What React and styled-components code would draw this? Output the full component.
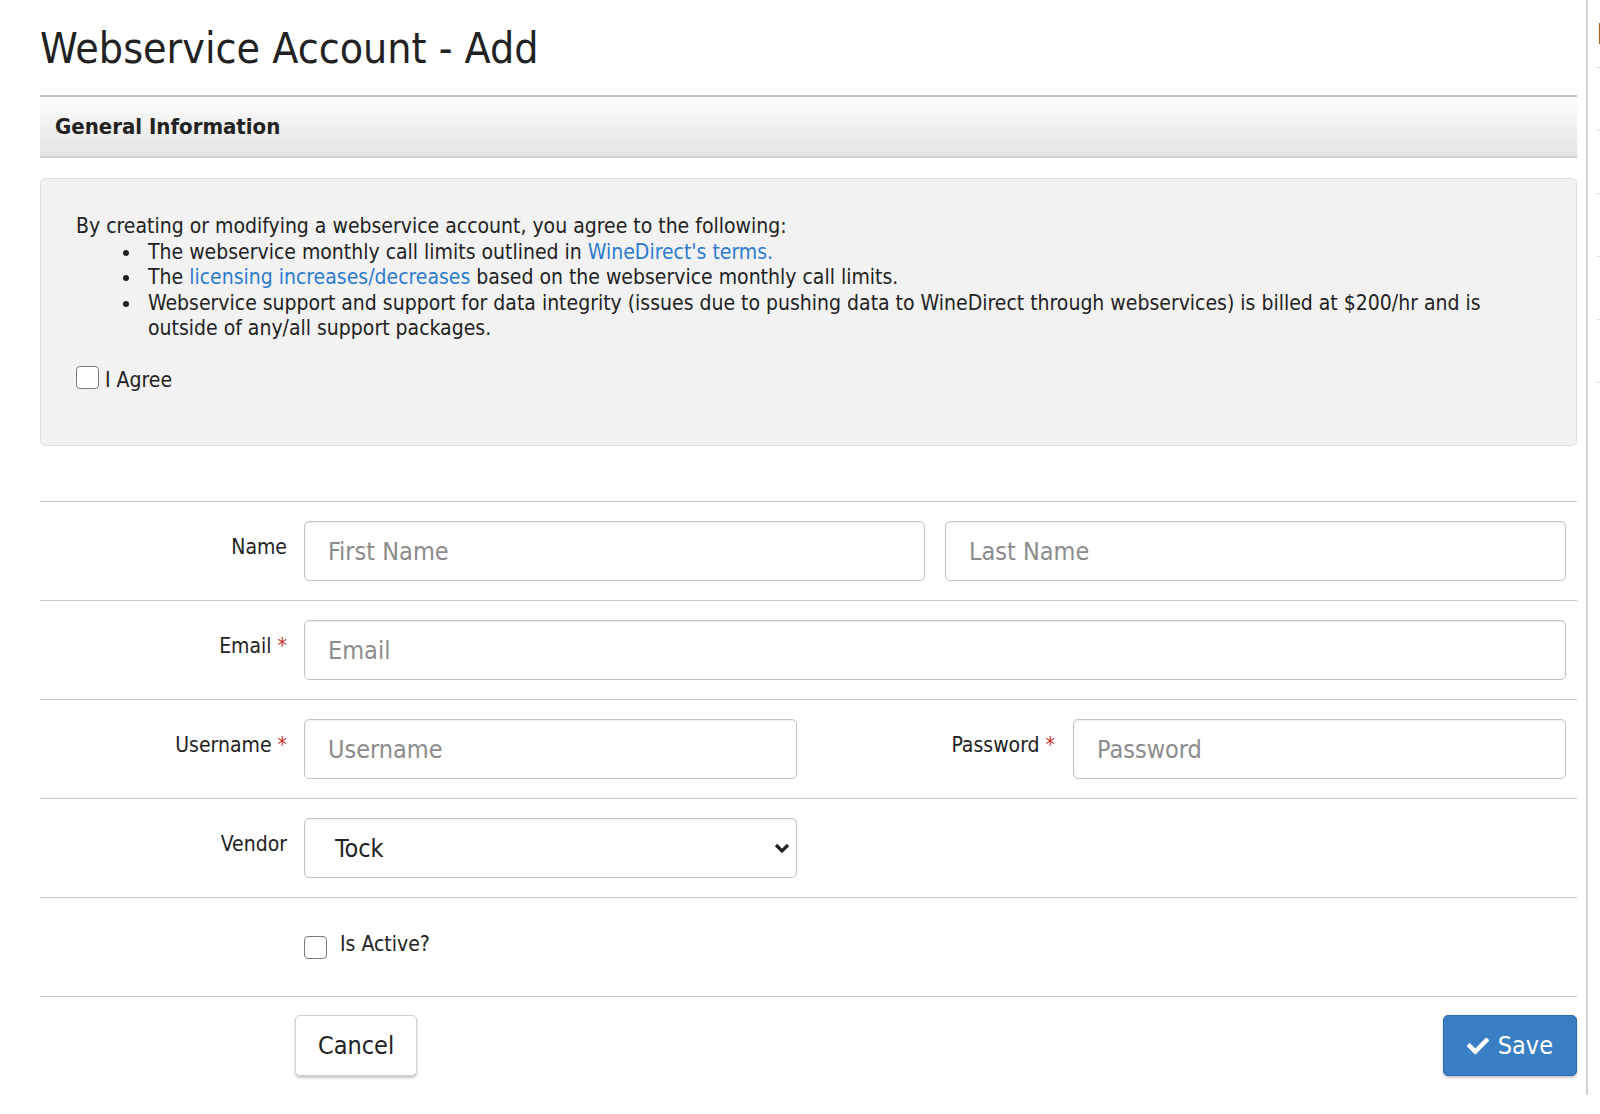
import React from 'react';
import styled, {createGlobalStyle} from 'styled-components';
import {FaCheck} from 'react-icons/fa';

const GlobalStyle = createGlobalStyle`
  body {
    margin: 0;
    background: #fff;
    color: #222;
    font-family: "DejaVu Sans Condensed", "DejaVu Sans", sans-serif;
  }
  * {
    box-sizing: border-box;
  }
`;

const Page = styled.div`
  display: flex;
  align-items: flex-start;
  width: 1600px;
`;

const Main = styled.main`
  flex: 1;
  padding: 0 9px 19px 40px;
  border-right: 2px solid #d2d2d2;
`;

const Sidebar = styled.aside`
  width: 12px;
  overflow: hidden;
  padding-left: 9px;
  white-space: nowrap;
`;

const SideTitle = styled.div`
  height: 67px;
  padding-top: 18px;
  font-size: 28px;
  font-weight: bold;
  color: #222;
`;

const SideItem = styled.div`
  height: 63px;
  border-top: 1px solid #dcdcdc;
`;

const Title = styled.h1`
  margin: 0 0 21px;
  padding-top: 24px;
  font-size: 42.5px;
  font-weight: normal;
  line-height: 50px;
  color: #222;
`;

const SectionHeader = styled.div`
  display: flex;
  align-items: center;
  height: 63px;
  padding-left: 15px;
  border-top: 2px solid #c4c4c4;
  border-bottom: 2px solid #d2d2d2;
  background: linear-gradient(#fdfdfd, #e4e4e4);
  font-size: 22px;
  font-weight: bold;
  color: #222;
`;

const InfoBox = styled.div`
  height: 268px;
  margin-top: 20px;
  padding: 35px 35px 0 35px;
  border: 1px solid #dedede;
  border-radius: 5px;
  background: #f2f2f2;
  font-size: 21px;
  line-height: 25.5px;
`;

const Terms = styled.ul`
  margin: 0;
  padding-left: 72px;
  list-style: none;
`;

const Term = styled.li`
  position: relative;
  &::before {
    content: "";
    position: absolute;
    left: -25px;
    top: 10px;
    width: 6px;
    height: 6px;
    border-radius: 50%;
    background: #222;
  }
`;

const Link = styled.a`
  color: #2b7bcf;
  text-decoration: none;
`;

const AgreeRow = styled.label`
  display: flex;
  align-items: flex-start;
  gap: 6px;
  margin-top: 24px;
  font-size: 21px;
  line-height: 25px;
  & > span {
    padding-top: 2px;
  }
`;

const Checkbox = styled.input.attrs({type: 'checkbox'})`
  appearance: none;
  width: 23px;
  height: 23px;
  margin: 0;
  flex: none;
  border: 1.5px solid #7a7a7a;
  border-radius: 4px;
  background: #fff;
`;

const Form = styled.form`
  margin-top: 55px;
`;

const FormRow = styled.div`
  display: grid;
  grid-template-columns: 247px 1fr;
  column-gap: 17px;
  padding: 19px 11px 19px 0;
  border-top: 1px solid #c8c8c8;
`;

const Label = styled.label`
  padding-top: 14px;
  text-align: right;
  font-size: 21px;
  line-height: 25px;
  color: #222;
`;

const Required = styled.span`
  margin-left: 6px;
  color: #c9302c;
`;

const Fields = styled.div`
  display: grid;
  grid-template-columns: ${({$cols}) => $cols || '1fr'};
  column-gap: ${({$gap}) => $gap || 0}px;
  align-items: start;
`;

const InlineLabel = styled(Label)`
  padding-right: 18px;
`;

const TextInput = styled.input`
  width: 100%;
  height: 60px;
  padding: 0 23px;
  border: 1px solid #c4c4c4;
  border-radius: 5px;
  box-shadow: inset 0 1px 2px rgba(0, 0, 0, 0.08);
  font-family: inherit;
  font-size: 25px;
  color: #222;
  background: #fff;
  &::placeholder {
    color: #8c8c8c;
  }
`;

const SelectWrap = styled.div`
  position: relative;
`;

const Select = styled.select`
  appearance: none;
  width: 100%;
  height: 60px;
  padding: 0 40px 0 30px;
  border: 1px solid #c4c4c4;
  border-radius: 5px;
  box-shadow: inset 0 1px 2px rgba(0, 0, 0, 0.08);
  font-family: inherit;
  font-size: 25px;
  color: #222;
  background: #fff;
`;

const Chevron = styled.svg`
  position: absolute;
  right: 7px;
  top: 50%;
  transform: translateY(-50%);
  pointer-events: none;
`;

const CheckField = styled.label`
  display: flex;
  align-items: flex-start;
  gap: 13px;
  padding-top: 15px;
  height: 60px;
  font-size: 21px;
  line-height: 25px;
  & > input {
    margin-top: 4px;
  }
`;

const ButtonRow = styled.div`
  display: flex;
  justify-content: space-between;
  align-items: center;
  padding: 18px 0 0 255px;
  border-top: 1px solid #c8c8c8;
`;

const Button = styled.button`
  display: inline-flex;
  align-items: center;
  justify-content: center;
  gap: 9px;
  height: 61px;
  padding: 0 ${({$primary}) => ($primary ? 23 : 22)}px;
  border-radius: 5px;
  font-family: inherit;
  font-size: 25px;
  cursor: pointer;
  box-shadow: 0 2px 3px rgba(0, 0, 0, 0.22);
  border: 1px solid ${({$primary}) => ($primary ? '#2c6aa8' : '#d0d0d0')};
  background: ${({$primary}) => ($primary ? '#3a7fc3' : '#fff')};
  color: ${({$primary}) => ($primary ? '#fff' : '#222')};
`;

const App = () => (
  <>
    <GlobalStyle/>
    <Page>
      <Main>
        <Title>Webservice Account - Add</Title>
        <SectionHeader>General Information</SectionHeader>

        <InfoBox>
          By creating or modifying a webservice account, you agree to the following:
          <Terms>
            <Term>The webservice monthly call limits outlined in <Link href="#">WineDirect's terms.</Link></Term>
            <Term>The <Link href="#">licensing increases/decreases</Link> based on the webservice monthly call limits.</Term>
            <Term>
              Webservice support and support for data integrity (issues due to pushing data to WineDirect
              through webservices) is billed at $200/hr and is<br/>outside of any/all support packages.
            </Term>
          </Terms>
          <AgreeRow>
            <Checkbox/>
            <span>I Agree</span>
          </AgreeRow>
        </InfoBox>

        <Form onSubmit={e => e.preventDefault()}>
          <FormRow>
            <Label>Name</Label>
            <Fields $cols="1fr 1fr" $gap={20}>
              <TextInput placeholder="First Name"/>
              <TextInput placeholder="Last Name"/>
            </Fields>
          </FormRow>

          <FormRow>
            <Label>Email<Required>*</Required></Label>
            <Fields>
              <TextInput placeholder="Email"/>
            </Fields>
          </FormRow>

          <FormRow>
            <Label>Username<Required>*</Required></Label>
            <Fields $cols="493px 1fr 493px">
              <TextInput placeholder="Username"/>
              <InlineLabel>Password<Required>*</Required></InlineLabel>
              <TextInput type="password" placeholder="Password"/>
            </Fields>
          </FormRow>

          <FormRow>
            <Label>Vendor</Label>
            <Fields $cols="493px">
              <SelectWrap>
                <Select defaultValue="tock">
                  <option value="tock">Tock</option>
                </Select>
                <Chevron width="16" height="11" viewBox="0 0 16 11">
                  <path d="M2 2.5l6 6 6-6" fill="none" stroke="#222" strokeWidth="3.2"/>
                </Chevron>
              </SelectWrap>
            </Fields>
          </FormRow>

          <FormRow>
            <div/>
            <CheckField>
              <Checkbox/>
              Is Active?
            </CheckField>
          </FormRow>

          <ButtonRow>
            <Button type="button">Cancel</Button>
            <Button type="submit" $primary>
              <FaCheck size={22}/>
              Save
            </Button>
          </ButtonRow>
        </Form>
      </Main>

      <Sidebar>
        <SideTitle>Help</SideTitle>
        {[0, 1, 2, 3, 4, 5].map(i => <SideItem key={i}/>)}
      </Sidebar>
    </Page>
  </>
);

export default App;
